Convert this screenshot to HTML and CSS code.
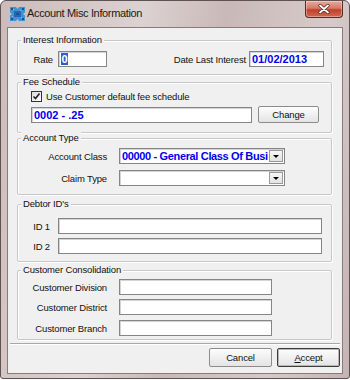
FILE: index.html
```html
<!DOCTYPE html>
<html>
<head>
<meta charset="utf-8">
<link rel="stylesheet" href="styles.css">
</head>
<body>
<div class="window">
  <div class="titlebar">
    <svg class="appicon" width="15" height="14" viewBox="0 0 15 14">
      <path d="M0 0h6l1.5 2L9 0h6v5.5l-2 1.5 2 1.5V14H9l-1.5-2L6 14H0V8.5l2-1.5-2-1.5z" fill="#3d93d4"/>
      <path d="M4 4h7v6H4z" fill="#2767b0"/>
      <path d="M1 1h2v2H1zM12 1h2v2h-2zM1 11h2v2H1zM12 11h2v2h-2zM6 6h3v2H6z" fill="#1c4f93"/>
      <path d="M3 2h1v1H3zM10 3h1v1h-1zM2 9h1v1H2zM11 10h1v1h-1z" fill="#8cc6ee"/>
    </svg>
    <span class="title">Account Misc Information</span>
    <div class="close">
      <svg width="12" height="10" viewBox="0 0 12 10">
        <path d="M2 1.5l8 7M10 1.5l-8 7" stroke="#5a2020" stroke-width="3.2" stroke-linecap="round"/>
        <path d="M2 1.5l8 7M10 1.5l-8 7" stroke="#ffffff" stroke-width="1.8" stroke-linecap="round"/>
      </svg>
    </div>
  </div>
  <div class="client">
    <div class="group g1">
      <span class="legend">Interest Information</span>
      <div class="row">
        <span class="lbl lbl-rate">Rate</span>
        <div class="field f-rate"><span class="sel">0</span></div>
        <span class="lbl lbl-date">Date Last Interest</span>
        <div class="field f-date">01/02/2013</div>
      </div>
    </div>

    <div class="group g2">
      <span class="legend">Fee Schedule</span>
      <div class="row chk-row">
        <span class="check">
          <svg width="9" height="9" viewBox="0 0 9 9"><path d="M1.5 4.5l2 2 4-5" stroke="#222" stroke-width="1.6" fill="none"/></svg>
        </span>
        <span class="chk-lbl">Use Customer default fee schedule</span>
      </div>
      <div class="row fee-row">
        <div class="field f-fee">0002 - .25</div>
        <div class="btn btn-change">Change</div>
      </div>
    </div>

    <div class="group g3">
      <span class="legend">Account Type</span>
      <div class="row">
        <span class="lbl lbl-wide">Account Class</span>
        <div class="field combo"><span class="combo-text">00000 - General Class Of Busi</span><span class="drop"><i></i></span></div>
      </div>
      <div class="row r-gap6">
        <span class="lbl lbl-wide">Claim Type</span>
        <div class="field combo"><span class="combo-text"></span><span class="drop"><i></i></span></div>
      </div>
    </div>

    <div class="group g4">
      <span class="legend">Debtor ID's</span>
      <div class="row">
        <span class="lbl lbl-id">ID 1</span>
        <div class="field f-id"></div>
      </div>
      <div class="row r-gap4">
        <span class="lbl lbl-id">ID 2</span>
        <div class="field f-id"></div>
      </div>
    </div>

    <div class="group g5">
      <span class="legend">Customer Consolidation</span>
      <div class="row">
        <span class="lbl lbl-wide">Customer Division</span>
        <div class="field f-cust"></div>
      </div>
      <div class="row r-gap4">
        <span class="lbl lbl-wide">Customer District</span>
        <div class="field f-cust"></div>
      </div>
      <div class="row r-gap5">
        <span class="lbl lbl-wide">Customer Branch</span>
        <div class="field f-cust"></div>
      </div>
    </div>

    <div class="separator"></div>

    <div class="buttons">
      <div class="btn btn-dlg">Cancel</div>
      <div class="btn btn-dlg btn-default"><u>A</u>ccept</div>
    </div>
  </div>
</div>
</body>
</html>
```

FILE: styles.css
```css
body {
  margin: 0;
  background: #ffffff;
  font-family: "Liberation Sans", Arial, sans-serif;
  font-size: 9.5px;
  letter-spacing: -0.15px;
  color: #111;
}

.window {
  width: 350px;
  height: 379px;
  box-sizing: border-box;
  border: 1px solid #5e5252;
  border-radius: 6px 6px 3px 3px;
  background: linear-gradient(100deg, #cbbcbb 0%, #dcd2d1 35%, #c8b9b8 55%, #d6cbca 80%, #c4b4b3 100%);
  padding: 0 6px 4px 6px;
  display: flex;
  flex-direction: column;
}

.titlebar {
  height: 26px;
  display: flex;
  align-items: flex-start;
}

.appicon {
  margin: 6px 0 0 3px;
  flex: none;
}

.title {
  margin: 6px 0 0 2px;
  font-size: 11px;
  letter-spacing: -0.35px;
  color: #1a1a1a;
  line-height: 13px;
}

.close {
  margin-left: auto;
  margin-right: 0;
  width: 38px;
  height: 17px;
  box-sizing: border-box;
  border: 1px solid #5b2a24;
  border-top: none;
  border-radius: 0 0 4px 4px;
  background: linear-gradient(#e8a99c 0%, #d47a68 45%, #c0402c 55%, #cf6a52 100%);
  box-shadow: inset 0 0 0 1px rgba(255,255,255,0.35);
  display: flex;
  align-items: center;
  justify-content: center;
}

.client {
  height: 347px;
  box-sizing: border-box;
  border: 1px solid #8a7b7b;
  background: #f0f0f0;
  padding-top: 12px;
  display: flex;
  flex-direction: column;
}

.group {
  position: relative;
  width: 315px;
  box-sizing: border-box;
  margin-left: 9px;
  border: 1px solid #c8c8c8;
  box-shadow: 1px 1px 0 #ffffff, inset 1px 1px 0 #ffffff;
  border-radius: 2px;
}

.legend {
  position: absolute;
  top: -7px;
  left: 3px;
  padding: 0 2px;
  background: #f0f0f0;
  line-height: 12px;
}

.g1 { height: 35px; padding-top: 10px; }
.g2 { height: 51px; margin-top: 7px; padding-top: 8px; }
.g3 { height: 57px; margin-top: 5px; padding-top: 9px; }
.g4 { height: 58px; margin-top: 9px; padding-top: 13px; }
.g5 { height: 70px; margin-top: 8px; padding-top: 8px; }

.row {
  display: flex;
  align-items: center;
  height: 16px;
}

.r-gap4 { margin-top: 4px; }
.r-gap5 { margin-top: 5px; }
.r-gap6 { margin-top: 6px; }

.lbl {
  text-align: right;
  flex: none;
  white-space: nowrap;
}

.lbl-rate { width: 35px; margin-right: 5px; }
.lbl-date { width: 139px; margin-right: 3px; }
.lbl-wide { width: 89px; margin-right: 12px; }
.lbl-id { width: 32px; margin-right: 8px; }

.field {
  height: 16px;
  box-sizing: border-box;
  border: 1px solid #858585;
  box-shadow: inset 1px 1px 0 #d4d4d4;
  background: #ffffff;
  font-size: 11px;
  font-weight: bold;
  letter-spacing: 0;
  color: #0000ee;
  line-height: 14px;
  padding-left: 2px;
  white-space: nowrap;
  overflow: hidden;
  flex: none;
}

.f-rate { width: 49px; }
.f-date { width: 75px; }
.f-fee { width: 221px; margin-left: 13px; }
.f-id { width: 264px; }
.f-cust { width: 153px; }

.sel {
  background: #2d5fd0;
  color: #ffffff;
  padding: 0 0.5px;
}

.chk-row {
  height: 11px;
}

.check {
  width: 11px;
  height: 11px;
  box-sizing: border-box;
  border: 1px solid #333;
  background: linear-gradient(135deg, #dcdcdc, #ffffff);
  margin-left: 13px;
  display: flex;
  align-items: center;
  justify-content: center;
  flex: none;
}

.chk-lbl {
  margin-left: 4px;
  line-height: 11px;
}

.fee-row {
  height: 17px;
  margin-top: 4px;
}

.btn {
  box-sizing: border-box;
  border: 1px solid #8c8c8c;
  border-radius: 2px;
  background: linear-gradient(#fdfdfd 0%, #f0f0f0 50%, #e4e4e4 100%);
  display: flex;
  align-items: center;
  justify-content: center;
  flex: none;
}

.btn-change {
  width: 61px;
  height: 17px;
  margin-left: 6px;
}

.combo {
  width: 166px;
  display: flex;
  padding-left: 2px;
}

.combo-text {
  flex: 1;
  overflow: hidden;
  white-space: nowrap;
  letter-spacing: -0.35px;
}

.drop {
  width: 14px;
  height: 12px;
  margin: 1px 1px 0 0;
  box-sizing: border-box;
  border: 1px solid #9a9a9a;
  background: linear-gradient(#f6f6f6, #e2e2e2);
  display: flex;
  align-items: center;
  justify-content: center;
  flex: none;
}

.drop i {
  width: 0;
  height: 0;
  border-left: 3px solid transparent;
  border-right: 3px solid transparent;
  border-top: 3px solid #000;
  margin-top: 1px;
}

.separator {
  margin: 3px 2px 0 2px;
  height: 2px;
  box-sizing: border-box;
  border-top: 1px solid #a8a8a8;
  border-bottom: 1px solid #ffffff;
}

.buttons {
  display: flex;
  justify-content: flex-end;
  gap: 5px;
  margin-top: 3px;
  padding-right: 2px;
}

.btn-dlg {
  width: 63px;
  height: 19px;
}

.btn-default {
  border-color: #3c3c3c;
  box-shadow: inset 0 0 0 1px #b8b8b8;
}

.btn-default u {
  text-decoration: underline;
}
```
